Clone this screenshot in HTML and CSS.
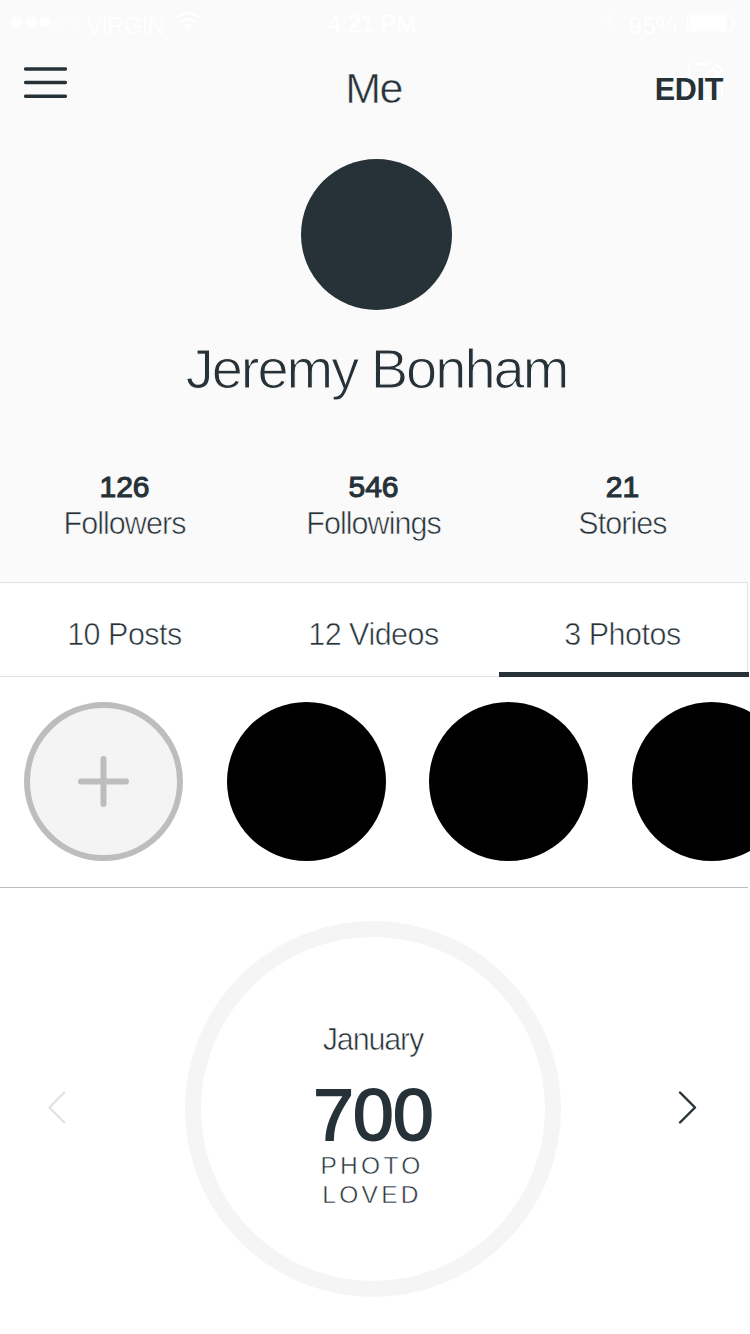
FILE: index.html
```html
<!DOCTYPE html>
<html lang="en">
<head>
<meta charset="utf-8">
<title>Me</title>
<link rel="stylesheet" href="styles.css">
</head>
<body>
<main class="screen">
  <header class="profile">
    <div class="status">
      <div class="status-left">
        <svg class="signal" width="70" height="12" viewBox="0 0 70 12"><g fill="#fff"><circle cx="6" cy="6" r="5.6"/><circle cx="20" cy="6" r="5.6"/><circle cx="34" cy="6" r="5.6"/></g><g fill="none" stroke="#fff"><circle cx="48" cy="6" r="5.1"/><circle cx="62" cy="6" r="5.1"/></g></svg>
        <span class="carrier">VIRGIN</span>
        <svg class="wifi" width="24" height="18" viewBox="0 0 24 18"><g fill="none" stroke="#fff" stroke-width="2.8"><path d="M1.2 5.8a15.5 15.5 0 0 1 21.6 0"/><path d="M5 10a10.3 10.3 0 0 1 14 0"/></g><path fill="#fff" d="M12 17.5 8 13.4a5.8 5.8 0 0 1 8 0z"/></svg>
      </div>
      <span class="time">4:21 PM</span>
      <div class="status-right">
        <svg class="bluetooth" width="14" height="26" viewBox="0 0 14 26"><path fill="none" stroke="#fff" stroke-width=".8" d="M1 7l12 12-6 6V1l6 6L1 19"/></svg>
        <span class="percent">95%</span>
        <svg class="battery" width="50" height="20" viewBox="0 0 50 20"><rect x=".7" y=".7" width="44.6" height="18.6" rx="3" fill="none" stroke="#fff" stroke-width="1.3"/><rect x="2.5" y="2.5" width="37" height="15" rx="1" fill="#fff"/><path fill="#fff" d="M47 6.5q5 3.5 0 7z"/></svg>
      </div>
    </div>
    <nav class="nav">
      <svg class="menu" width="43" height="32" viewBox="0 0 43 32"><path stroke="#263238" stroke-width="3.5" stroke-linecap="round" d="M1.7 1.9h39.6M1.7 15.5h39.6M1.7 29.2h39.6"/></svg>
      <h1 class="title thin">Me</h1>
      <div class="edit">
        <svg class="compose" width="36" height="36" viewBox="0 0 36 36"><g fill="none" stroke="#fff" stroke-width="2" stroke-linejoin="round"><path d="M22 1H5a4 4 0 0 0-4 4v26a4 4 0 0 0 4 4h25a4 4 0 0 0 4-4V16"/><path d="M12 24l2-7L29 2l5 5-15 15zM25 6l5 5"/></g></svg>
        <span class="edit-label">EDIT</span>
      </div>
    </nav>
    <div class="identity">
      <div class="avatar"></div>
      <h2 class="name">Jeremy Bonham</h2>
    </div>
    <div class="stats">
      <div class="stat"><span class="count">126</span><span class="label thin">Followers</span></div>
      <div class="stat"><span class="count">546</span><span class="label thin">Followings</span></div>
      <div class="stat"><span class="count">21</span><span class="label thin">Stories</span></div>
    </div>
  </header>
  <div class="tabs">
    <span class="tab">10 Posts</span>
    <span class="tab">12 Videos</span>
    <span class="tab active">3 Photos</span>
  </div>
  <section class="reel">
    <div class="bubble add"><svg width="51" height="51" viewBox="0 0 51 51"><path stroke="#bdbdbd" stroke-width="6" stroke-linecap="round" d="M25.5 3v45M3 25.5h45"/></svg></div>
    <div class="bubble"></div>
    <div class="bubble"></div>
    <div class="bubble"></div>
  </section>
  <div class="rule"></div>
  <section class="loved">
    <svg class="arrow" width="20" height="34" viewBox="0 0 20 34"><path fill="none" stroke="#e0e0e0" stroke-width="2" stroke-linecap="round" stroke-linejoin="round" d="M16.3 1.5 1.3 16.5l15 15"/></svg>
    <div class="ring">
      <span class="month">January</span>
      <span class="total">700</span>
      <span class="caption">PHOTO</span>
      <span class="caption">LOVED</span>
    </div>
    <svg class="arrow" width="20" height="34" viewBox="0 0 20 34"><path fill="none" stroke="#263238" stroke-width="2.4" stroke-linecap="round" stroke-linejoin="round" d="M2 1.5l15 15-15 15"/></svg>
  </section>
</main>
</body>
</html>
```
FILE: styles.css
```css
* { box-sizing: border-box; }

body {
  margin: 0;
  background: #fff;
  color: #263238;
  font-family: "Liberation Sans", Arial, sans-serif;
}

svg { display: block; flex: none; }

.screen {
  width: 750px;
  height: 1334px;
  overflow: hidden;
}

.profile {
  width: 748px;
  height: 582px;
  background: #fafafa;
}

/* Outlining glyphs in the surface colour slims them to a light weight. */
.thin { -webkit-text-stroke: 0.6px #fafafa; }

.status {
  display: grid;
  grid-template-columns: 1fr auto 1fr;
  height: 48px;
  padding: 0 11px;
  color: #fff;
  font-size: 24.5px;
  line-height: 28px;
}

.status-left, .status-right { display: flex; align-items: flex-start; }
.status-right { justify-content: flex-end; }
.signal { margin-top: 16px; }
.carrier { margin: 12px 0 0 5px; letter-spacing: -1.1px; }
.wifi { margin: 12px 0 0 12px; }
.time { margin: 10px 4px 0 0; letter-spacing: -0.4px; -webkit-text-stroke: 0.6px #fff; }
.bluetooth { margin: 9px 13px 0 0; }
.percent { margin: 12px 10px 0 0; letter-spacing: -0.3px; }
.battery { margin-top: 12px; }

.nav {
  display: grid;
  grid-template-columns: 1fr auto 1fr;
  height: 111px;
  padding: 0 25px 0 24px;
}

.menu { margin-top: 19px; }

.title {
  margin: 16px 0 0;
  font-size: 43px;
  font-weight: 400;
  line-height: 48px;
  letter-spacing: -1.6px;
}

.edit {
  position: relative;
  justify-self: end;
  margin-top: 22px;
}

.compose { position: absolute; right: -1px; top: -7px; }

.edit-label {
  position: relative;
  font-size: 30.5px;
  font-weight: 700;
  line-height: 38px;
  letter-spacing: -0.3px;
}

.identity {
  display: flex;
  flex-direction: column;
  align-items: center;
  padding-left: 5px;
}

.avatar {
  width: 151px;
  height: 151px;
  border-radius: 50%;
  background: #263238;
}

.name {
  margin: 27px 0 0;
  font-size: 56px;
  font-weight: 400;
  line-height: 64px;
  letter-spacing: -2px;
  -webkit-text-stroke: 1.1px #fafafa;
}

.stats {
  display: grid;
  grid-template-columns: repeat(3, 1fr);
  width: 747px;
  margin-top: 67px;
}

.stat {
  display: flex;
  flex-direction: column;
  align-items: center;
  font-size: 30.5px;
  line-height: 37px;
}

.count {
  font-size: 30px;
  -webkit-text-stroke: 1.1px #263238;
}

.label { letter-spacing: -0.95px; }

.tabs {
  display: grid;
  grid-template-columns: repeat(3, 1fr);
  width: 748px;
  height: 95px;
  border: solid #e0e0e0;
  border-width: 1px 1px 1px 0;
}

.tab {
  position: relative;
  padding-top: 33px;
  font-size: 30.5px;
  line-height: 37px;
  letter-spacing: -0.5px;
  text-align: center;
  -webkit-text-stroke: 0.6px #fff;
}

.active::after {
  content: "";
  position: absolute;
  left: 1px;
  right: -2px;
  bottom: -1px;
  height: 5px;
  background: #263238;
}

.reel {
  display: flex;
  gap: 43.6px;
  width: 750px;
  height: 210px;
  padding: 25px 0 0 24px;
  overflow: hidden;
}

.rule {
  width: 748px;
  height: 1px;
  background: #bdbdbd;
}

.bubble {
  flex: none;
  width: 159px;
  height: 159px;
  border-radius: 50%;
  background: #000;
}

.add {
  display: grid;
  place-items: center;
  border: 6px solid #bdbdbd;
  background: #f4f4f4;
}

.loved {
  display: flex;
  gap: 117px;
  padding: 33px 0 0 48px;
}

.arrow { margin-top: 170px; }

.ring {
  display: flex;
  flex-direction: column;
  align-items: center;
  width: 376px;
  height: 376px;
  padding-top: 84px;
  border: 16px solid #f5f5f5;
  border-radius: 50%;
}

.month {
  font-size: 30.5px;
  line-height: 36px;
  letter-spacing: -1.15px;
  -webkit-text-stroke: 0.6px #fff;
}

.total {
  margin: 28px 0 6px;
  font-size: 73px;
  line-height: 60px;
  letter-spacing: -0.7px;
  -webkit-text-stroke: 1.8px #263238;
}

.caption {
  margin-right: 2px;
  font-size: 24.5px;
  line-height: 29px;
  letter-spacing: 3.3px;
  -webkit-text-stroke: 0.5px #fff;
}
```
